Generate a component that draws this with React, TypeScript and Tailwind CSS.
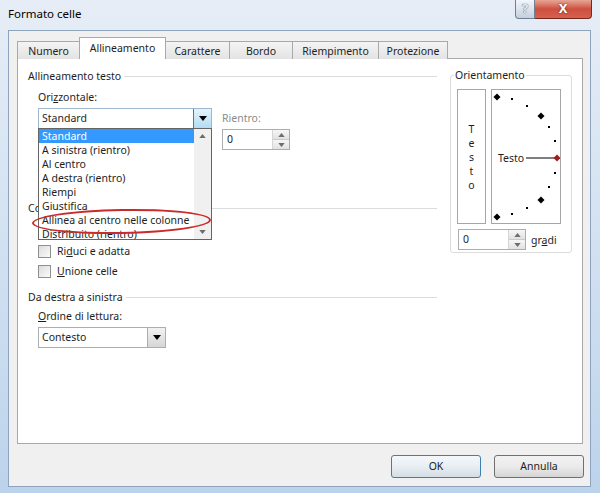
import type { ReactNode } from 'react';

const tabs = [
  { label: 'Numero', w: 'w-[63px]' },
  { label: 'Allineamento', w: 'w-[87px]', active: true },
  { label: 'Carattere', w: 'w-[65px]' },
  { label: 'Bordo', w: 'w-[64px]' },
  { label: 'Riempimento', w: 'w-[87px]' },
  { label: 'Protezione', w: 'w-[70px]' },
];

const options = [
  'Standard',
  'A sinistra (rientro)',
  'Al centro',
  'A destra (rientro)',
  'Riempi',
  'Giustifica',
  'Allinea al centro nelle colonne',
  'Distribuito (rientro)',
];

const GroupHeader = ({ title, clip = false }: { title: string; clip?: boolean }) => (
  <div className="flex items-center gap-[3px] h-[16px]">
    <span className={`leading-[16px] whitespace-nowrap ${clip ? 'w-[10px] overflow-hidden' : ''}`}>{title}</span>
    <div className="flex-1 h-px bg-[#dcdcdc]" />
  </div>
);

const Triangle = ({ up = false, small = false }: { up?: boolean; small?: boolean }) => (
  <svg width={small ? 7 : 8} height={small ? 4 : 5} viewBox="0 0 8 5">
    {up ? (
      <path d="M0 5 L4 0 L8 5 Z" fill={small ? '#6d6d6d' : '#000'} />
    ) : (
      <path d="M0 0 L8 0 L4 5 Z" fill={small ? '#6d6d6d' : '#000'} />
    )}
  </svg>
);

const Spinner = ({ w }: { w: string }) => (
  <div className={`flex h-[21px] ${w} border border-[#abadb3] bg-white`}>
    <div className="flex-1 pl-[4px] leading-[19px]">0</div>
    <div className="flex flex-col w-[17px] border-l border-[#d5d5d5]">
      <div className="flex-1 flex items-center justify-center bg-gradient-to-b from-[#f6f6f6] to-[#e2e2e2] border-b border-[#c9c9c9]">
        <Triangle up small />
      </div>
      <div className="flex-1 flex items-center justify-center bg-gradient-to-b from-[#f6f6f6] to-[#e2e2e2]">
        <Triangle small />
      </div>
    </div>
  </div>
);

const Checkbox = ({ children }: { children: ReactNode }) => (
  <div className="flex items-center gap-[6px] h-[16px]">
    <div className="w-[13px] h-[13px] border border-[#8e8f8f] bg-gradient-to-br from-[#dcdcdc] to-[#fbfbfb]" />
    <span className="leading-[16px]">{children}</span>
  </div>
);

const Dial = () => {
  const big = [
    [6, 8],
    [50, 27],
    [50, 111],
    [6, 128],
  ];
  const small = [
    [21, 10],
    [36, 17],
    [58, 38],
    [64, 52],
    [64, 84],
    [58, 98],
    [36, 119],
    [21, 125],
  ];
  return (
    <svg width="68" height="133" viewBox="1 1 68 133" className="block">
      {big.map(([x, y]) => (
        <rect key={`b${x}-${y}`} x={x - 2.5} y={y - 2.5} width="5" height="5" fill="#000" transform={`rotate(45 ${x} ${y})`} />
      ))}
      {small.map(([x, y]) => (
        <rect key={`s${x}-${y}`} x={x - 1} y={y - 1} width="2" height="2" fill="#000" />
      ))}
      <line x1="35" y1="69" x2="64" y2="69" stroke="#000" strokeWidth="1" />
      <rect x={63.5} y={66.5} width="5" height="5" fill="#a01e1e" transform="rotate(45 66 69)" />
      <text x="7" y="73" fontSize="10.5" fontFamily="'Noto Sans', sans-serif" fill="#1e1e1e">
        Testo
      </text>
    </svg>
  );
};

export default function App() {
  return (
    <div className="w-[600px] h-[493px] overflow-hidden flex flex-col pl-[8px] pr-[9px] pb-[6px] bg-gradient-to-b from-[#e6edf6] via-[#d2e1f1] to-[#bcd3ec] font-['Noto_Sans',sans-serif] text-[10.5px] text-[#1e1e1e]">
      {/* Title bar */}
      <div className="h-[30px] flex items-start justify-between">
        <span className="pt-[6px] leading-[16px] text-[11.5px] text-black">Formato celle</span>
        <div className="flex mr-[-1px]">
          <div className="w-[20px] h-[19px] flex items-center justify-center border border-[#6f7f96] border-t-0 rounded-bl-[4px] bg-gradient-to-b from-[#f3f6fa] to-[#c5d0de] text-[13px] font-bold text-[#e8edf3] [text-shadow:0_0_1px_#53627a,0_0_1px_#53627a]">
            ?
          </div>
          <div className="w-[57px] h-[19px] flex items-center justify-center border border-l-0 border-[#74291f] border-t-0 rounded-br-[4px] bg-gradient-to-b from-[#e7a595] via-[#cd4f3f] to-[#d8604c] text-[13px] font-bold text-white [text-shadow:0_0_2px_#5a1a12]">
            X
          </div>
        </div>
      </div>

      {/* Client area */}
      <div className="flex-1 flex flex-col bg-[#f0f0f0] border border-[#8ea3bc] pt-[6px] pl-[8px] pr-[7px]">
        {/* Tabs */}
        <div className="flex items-end h-[22px] mb-[-1px] relative z-10">
          {tabs.map((t) =>
            t.active ? (
              <div
                key={t.label}
                className={`${t.w} h-[22px] -ml-px bg-white border border-b-0 border-[#a9a9a9] flex justify-center pt-[2px] leading-[16px]`}
              >
                {t.label}
              </div>
            ) : (
              <div
                key={t.label}
                className={`${t.w} h-[18px] bg-gradient-to-b from-[#f4f4f4] to-[#e3e3e3] border border-[#a9a9a9] border-b-0 -ml-px first:ml-0 flex items-center justify-center leading-[16px]`}
              >
                {t.label}
              </div>
            )
          )}
        </div>

        {/* Panel */}
        <div className="h-[386px] bg-white border border-[#a9a9a9] flex">
          {/* Left column */}
          <div className="w-[419px] pl-[10px] pt-[9px] flex flex-col">
            <GroupHeader title="Allineamento testo" />
            <div className="pl-[10px] flex flex-col">
              <div className="mt-[5px] leading-[16px]">
                Ori<span className="underline">z</span>zontale:
              </div>
              <div className="mt-[3px] flex items-start">
                <div className="relative w-[174px] h-[21px]">
                  <div className="flex h-[21px] border border-[#9fb7cf] bg-white">
                    <div className="flex-1 pl-[3px] leading-[19px]">Standard</div>
                    <div className="w-[18px] flex items-center justify-center border-l border-[#3c7fb1] bg-gradient-to-b from-[#e3f3fc] to-[#b3dcf4]">
                      <Triangle />
                    </div>
                  </div>
                  {/* Open list */}
                  <div className="absolute left-0 top-[20px] w-[174px] h-[112px] border border-[#646464] bg-white flex overflow-hidden z-20">
                    <div className="flex-1 flex flex-col">
                      {options.map((o, i) => (
                        <div
                          key={o}
                          className={`h-[14px] shrink-0 leading-[14px] pl-[3px] whitespace-nowrap ${
                            i === 0 ? 'bg-[#3399ff] text-white' : ''
                          }`}
                        >
                          {o}
                        </div>
                      ))}
                    </div>
                    <div className="w-[17px] bg-[#f0f0f0] flex flex-col justify-between items-center py-[5px]">
                      <Triangle up small />
                      <Triangle small />
                    </div>
                  </div>
                  {/* Red ellipse */}
                  <div className="absolute left-[-6px] top-[101px] w-[179px] h-[25px] border-2 border-[#cc2a2a] rounded-[50%] z-30 rotate-[-1deg]" />
                </div>
                <div className="ml-[10px] mt-[2px] flex flex-col">
                  <span className="leading-[16px] text-[#8c8c8c]">Rientro:</span>
                  <div className="mt-[3px]">
                    <Spinner w="w-[68px]" />
                  </div>
                </div>
              </div>
            </div>

            <div className="mt-[50px]">
              <GroupHeader title="Controllo testo" clip />
            </div>
            <div className="pl-[10px] mt-[27px] flex flex-col gap-[4px]">
              <Checkbox>
                Ri<span className="underline">d</span>uci e adatta
              </Checkbox>
              <Checkbox>
                <span className="underline">U</span>nione celle
              </Checkbox>
            </div>

            <div className="mt-[10px]">
              <GroupHeader title="Da destra a sinistra" />
            </div>
            <div className="pl-[10px] flex flex-col">
              <div className="mt-[3px] leading-[16px]">
                <span className="underline">O</span>rdine di lettura:
              </div>
              <div className="mt-[3px] flex h-[21px] w-[128px] border border-[#abadb3] bg-white">
                <div className="flex-1 pl-[3px] leading-[19px]">Contesto</div>
                <div className="w-[18px] flex items-center justify-center border-l border-[#acacac] bg-gradient-to-b from-[#f2f2f2] to-[#d6d6d6]">
                  <Triangle />
                </div>
              </div>
            </div>
          </div>

          {/* Orientamento */}
          <fieldset className="ml-[13px] mt-[8px] w-[122px] h-[186px] border border-[#dcdcdc] rounded-[3px] self-start">
            <legend className="ml-[3px] px-[1px] leading-[16px]">Orientamento</legend>
            <div className="flex gap-[5px] pl-[6px] mt-[6px]">
              <div className="w-[29px] h-[135px] border border-[#a6a6a6] flex flex-col items-center justify-center leading-[14px]">
                {['T', 'e', 's', 't', 'o'].map((c, i) => (
                  <span key={i}>{c}</span>
                ))}
              </div>
              <div className="w-[70px] h-[135px] border border-[#a6a6a6]">
                <Dial />
              </div>
            </div>
            <div className="flex items-center gap-[5px] pl-[7px] mt-[5px]">
              <Spinner w="w-[68px]" />
              <span className="leading-[16px]">
                gr<span className="underline">a</span>di
              </span>
            </div>
          </fieldset>
        </div>

        {/* Buttons */}
        <div className="mt-[11px] flex justify-end gap-[13px] mr-[-1px]">
          <button className="w-[90px] h-[23px] rounded-[3px] border border-[#3c7fb1] bg-gradient-to-b from-[#f4f8fb] via-[#e8eef3] to-[#d4dde5] leading-[21px]">
            OK
          </button>
          <button className="w-[90px] h-[23px] rounded-[3px] border border-[#707070] bg-gradient-to-b from-[#f2f2f2] via-[#ebebeb] to-[#d5d5d5] leading-[21px]">
            Annulla
          </button>
        </div>
      </div>
    </div>
  );
}
